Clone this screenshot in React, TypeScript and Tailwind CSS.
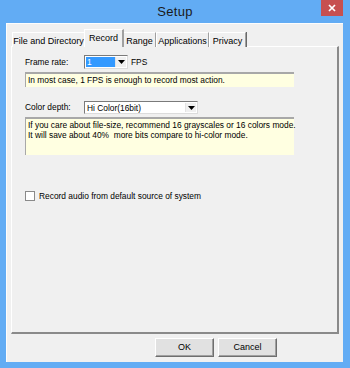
import React from "react";

const font = { fontFamily: '"Liberation Sans", Arial, sans-serif' };

function Arrow() {
  return (
    <div className="w-[11px] h-full bg-[#f0f0f0] border-l border-[#e3e3e3] flex items-center justify-center">
      <svg width="7" height="4" viewBox="0 0 7 4">
        <path d="M0 0 H7 L3.5 4 Z" fill="#000" />
      </svg>
    </div>
  );
}

function Tab({ label, w, selected }: { label: string; w: number; selected?: boolean }) {
  if (selected) {
    return (
      <div
        className="relative z-10 h-[18px] bg-[#f0f0f0] border-t border-l border-white border-r-2 border-r-[#a0a0a0] flex items-start justify-center pt-[2px] text-[9px] text-black whitespace-nowrap -mx-[1px]"
        style={{ width: w }}
      >
        {label}
      </div>
    );
  }
  return (
    <div
      className="h-[15px] bg-[#f0f0f0] border-t border-l border-white border-r border-r-[#a0a0a0] shadow-[1px_0_0_#696969] flex items-start justify-center pt-[2px] text-[9px] text-black whitespace-nowrap"
      style={{ width: w }}
    >
      {label}
    </div>
  );
}

export default function App() {
  return (
    <div className="w-[350px] h-[368px] bg-[#62acf4] flex flex-col overflow-hidden" style={font}>
      <div className="h-[23px] flex items-center justify-center relative shrink-0">
        <span className="text-[13px] text-[#1a1a1a] tracking-[0.3px]">Setup</span>
        <div className="absolute right-[7px] top-0 w-[22px] h-[16px] bg-[#c75050] flex items-center justify-center">
          <svg width="8" height="8" viewBox="0 0 8 8">
            <path d="M1 1 L7 7 M7 1 L1 7" stroke="#fff" strokeWidth="1.7" />
          </svg>
        </div>
      </div>
      <div className="flex-1 ml-[6px] mr-[7px] mb-[6px] bg-[#f0f0f0] border-l border-t border-[#fdfdfd] flex flex-col">
        <div className="flex items-end h-[18px] mt-[5px] ml-[5px] -mb-[1px] relative z-10">
          <Tab label="File and Directory" w={73} />
          <Tab label="Record" w={40} selected />
          <Tab label="Range" w={33} />
          <Tab label="Applications" w={53} />
          <Tab label="Privacy" w={37} />
        </div>
        <div className="ml-[4px] w-[328px] h-[288px] border-t border-l border-white border-r-2 border-b-2 border-r-[#8a8a8a] border-b-[#8a8a8a] flex flex-col pl-[13px] pt-[8px] text-[8.4px] text-black whitespace-nowrap">
          <div className="flex items-center h-[14px]">
            <span className="w-[59px]">Frame rate:</span>
            <div className="w-[44px] h-[14px] bg-white border border-t-[#7a7a7a] border-l-[#7a7a7a] border-r-[#dcdcdc] border-b-[#dcdcdc] flex p-[1px]">
              <div className="flex-1 bg-[#3399ff] text-white leading-[10px] pl-[1px]">1</div>
              <Arrow />
            </div>
            <span className="ml-[3px]">FPS</span>
          </div>
          <div className="mt-[3px] w-[269px] h-[15px] bg-[#ffffe1] border-t-2 border-l border-[#a8a8a8] flex items-center pl-[2px] leading-[11px]">
            In most case, 1 FPS is enough to record most action.
          </div>
          <div className="flex items-center h-[13px] mt-[14px]">
            <span className="w-[59px]">Color depth:</span>
            <div className="w-[114px] h-[13px] bg-white border border-[#7a7a7a] border-r-[#dcdcdc] border-b-[#dcdcdc] flex items-center pl-[2px]">
              <span className="flex-1 leading-[10px]">Hi Color(16bit)</span>
              <div className="h-full py-[1px] pr-[1px]">
                <Arrow />
              </div>
            </div>
          </div>
          <div className="mt-[3px] w-[269px] h-[38px] bg-[#ffffe1] border-t-2 border-l border-[#a8a8a8] pl-[2px] pt-[1px] leading-[10px]">
            <div>If you care about file-size, recommend 16 grayscales or 16 colors mode.</div>
            <div>It will save about 40%&nbsp; more bits compare to hi-color mode.</div>
          </div>
          <div className="flex items-center mt-[36px] h-[10px]">
            <div className="w-[10px] h-[10px] bg-white border border-[#8a8a8a]" />
            <span className="ml-[4px]">Record audio from default source of system</span>
          </div>
        </div>
        <div className="flex justify-end gap-[4px] mt-[4px] mr-[66px]">
          <div className="w-[59px] h-[19px] bg-[#e1e1e1] border border-t-white border-l-white border-r-[#6e6e6e] border-b-[#6e6e6e] shadow-[inset_-1px_-1px_0_#a0a0a0] flex items-center justify-center text-[9px]">
            OK
          </div>
          <div className="w-[59px] h-[19px] bg-[#e1e1e1] border border-t-white border-l-white border-r-[#6e6e6e] border-b-[#6e6e6e] shadow-[inset_-1px_-1px_0_#a0a0a0] flex items-center justify-center text-[9px]">
            Cancel
          </div>
        </div>
      </div>
    </div>
  );
}
